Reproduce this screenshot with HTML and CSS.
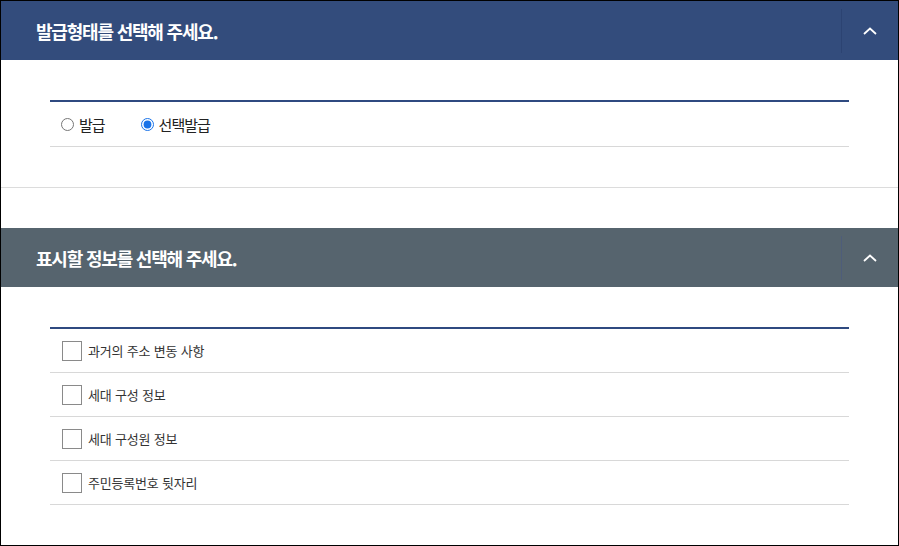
FILE: index.html
```html
<!DOCTYPE html>
<html lang="ko">
<head>
    <meta charset="UTF-8">
    <meta name="viewport" content="width=device-width, initial-scale=1.0">
    <title>발급 선택</title>
    <link rel="stylesheet" href="styles.css">
</head>
<body>
    <div class="frame">
        <div class="section first">
            <div class="panel-head blue">
                <h2>발급형태를 선택해 주세요.</h2>
                <button class="toggle" aria-label="접기">
                    <svg width="14" height="8" viewBox="0 0 14 8"><path d="M1 7 L7 1.5 L13 7" fill="none" stroke="#fff" stroke-width="1.8"/></svg>
                </button>
            </div>
            <div class="panel-body">
                <div class="radio-row">
                    <label class="radio"><input type="radio" name="kind"> 발급</label>
                    <label class="radio"><input type="radio" name="kind" checked> 선택발급</label>
                </div>
            </div>
        </div>

        <div class="section second">
            <div class="panel-head gray">
                <h2>표시할 정보를 선택해 주세요.</h2>
                <button class="toggle" aria-label="접기">
                    <svg width="14" height="8" viewBox="0 0 14 8"><path d="M1 7 L7 1.5 L13 7" fill="none" stroke="#fff" stroke-width="1.8"/></svg>
                </button>
            </div>
            <div class="panel-body">
                <ul class="check-list">
                    <li><span class="box"></span>과거의 주소 변동 사항</li>
                    <li><span class="box"></span>세대 구성 정보</li>
                    <li><span class="box"></span>세대 구성원 정보</li>
                    <li><span class="box"></span>주민등록번호 뒷자리</li>
                </ul>
            </div>
        </div>
    </div>
</body>
</html>
```

FILE: styles.css
```css
body {
    margin: 0;
    font-family: "Noto Sans CJK KR", "Noto Sans", sans-serif;
    color: #333;
    background-color: #fff;
}

.frame {
    width: 899px;
    height: 546px;
    box-sizing: border-box;
    border: 1px solid #000;
    overflow: hidden;
}

.section.first {
    border-bottom: 1px solid #dcdcdc;
}

.section.second {
    margin-top: 40px;
}

.panel-head {
    height: 59px;
    display: flex;
    align-items: center;
    justify-content: space-between;
    padding-left: 35px;
}

.panel-head.blue {
    background-color: #334c7c;
}

.panel-head.gray {
    background-color: #56646e;
}

.panel-head h2 {
    margin: 0;
    color: #fff;
    font-size: 18px;
    font-weight: 700;
    letter-spacing: -1.2px;
}

.toggle {
    width: 57px;
    height: 44px;
    border: none;
    border-left: 1px solid #2c4372;
    background: none;
    padding: 0;
    display: flex;
    align-items: center;
    justify-content: center;
    cursor: pointer;
}

.panel-head.gray .toggle {
    border-left-color: #4e5d7a;
}

.panel-body {
    padding: 40px 49px;
}

.radio-row {
    border-top: 2px solid #2f4a80;
    border-bottom: 1px solid #d8d8d8;
    height: 44px;
    display: flex;
    align-items: center;
    padding-left: 11px;
    gap: 36px;
}

.radio {
    display: flex;
    align-items: center;
    gap: 5px;
    font-size: 15px;
    letter-spacing: -1px;
    color: #222;
}

.radio input {
    width: 13px;
    height: 13px;
    margin: 0;
    accent-color: #1a73e8;
}

.check-list {
    list-style: none;
    margin: 0;
    padding: 0;
    border-top: 2px solid #2f4a80;
}

.check-list li {
    height: 43px;
    border-bottom: 1px solid #d8d8d8;
    display: flex;
    align-items: center;
    padding-left: 12px;
    font-size: 13px;
    letter-spacing: -0.2px;
    color: #333;
}

.box {
    width: 18px;
    height: 18px;
    border: 1px solid #8a8a8a;
    background-color: #fff;
    margin-right: 6px;
}
```
